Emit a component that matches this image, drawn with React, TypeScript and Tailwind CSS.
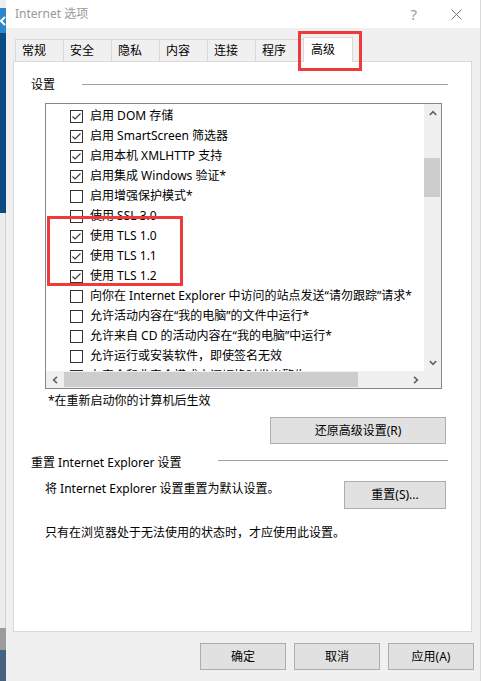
import React from "react";

type Item = { label: string; checked: boolean };

const items: Item[] = [
  { label: "启用 DOM 存储", checked: true },
  { label: "启用 SmartScreen 筛选器", checked: true },
  { label: "启用本机 XMLHTTP 支持", checked: true },
  { label: "启用集成 Windows 验证*", checked: true },
  { label: "启用增强保护模式*", checked: false },
  { label: "使用 SSL 3.0", checked: false },
  { label: "使用 TLS 1.0", checked: true },
  { label: "使用 TLS 1.1", checked: true },
  { label: "使用 TLS 1.2", checked: true },
  { label: "向你在 Internet Explorer 中访问的站点发送“请勿跟踪”请求*", checked: false },
  { label: "允许活动内容在“我的电脑”的文件中运行*", checked: false },
  { label: "允许来自 CD 的活动内容在“我的电脑”中运行*", checked: false },
  { label: "允许运行或安装软件，即使签名无效", checked: false },
  { label: "在安全和非安全模式之间切换时发出警告", checked: false },
];

const tabs = ["常规", "安全", "隐私", "内容", "连接", "程序"];

function CheckBox({ checked }: { checked: boolean }) {
  return (
    <svg width="13" height="13" viewBox="0 0 13 13" className="shrink-0">
      <rect x="0.5" y="0.5" width="12" height="12" fill="#fff" stroke="#333" />
      {checked && <polyline points="2.5,6.5 5,9 10.5,3.5" fill="none" stroke="#333" strokeWidth="1.1" />}
    </svg>
  );
}

function Chevron({ dir }: { dir: "up" | "down" | "left" | "right" }) {
  const rot = { up: 0, right: 90, down: 180, left: 270 }[dir];
  return (
    <svg width="8" height="8" viewBox="0 0 8 8" style={{ transform: `rotate(${rot}deg)` }}>
      <path d="M0.8 6 L4 2.6 L7.2 6" fill="none" stroke="#606060" strokeWidth="1.6" />
    </svg>
  );
}

function WinButton({ label, className }: { label: string; className: string }) {
  return (
    <div
      className={`flex items-center justify-center border border-[#adadad] bg-[#e1e1e1] text-[12px] leading-[16px] text-black ${className}`}
    >
      {label}
    </div>
  );
}

export default function App() {
  return (
    <div className="relative flex h-[681px] w-[481px] overflow-hidden font-['Noto_Sans','Noto_Sans_CJK_SC',sans-serif] text-black">
      {/* desktop strip on the left */}
      <div className="flex w-[6px] shrink-0 flex-col">
        <div className="h-[8px] bg-[#eeeeee]" />
        <div className="flex h-[25px] items-center bg-[#2b86cc]">
          <svg width="6" height="10" viewBox="0 0 6 10">
            <path d="M5 1 L1 5 L5 9" fill="none" stroke="#fff" strokeWidth="2" />
          </svg>
        </div>
        <div className="h-[180px] bg-[#0c4a85]" />
        <div className="h-[415px] border-r border-[#d0d0d0] bg-[#ececec]" />
        <div className="h-[22px] bg-[#9c9c9c]" />
        <div className="flex-1 bg-[#45627f]" />
      </div>

      <div className="flex flex-1 flex-col border-r border-[#dadada]">
        {/* title bar */}
        <div className="flex h-[28px] shrink-0 items-center bg-white pl-[9px] text-[12px] text-[#999]">
          <span>Internet 选项</span>
          <span className="ml-auto mr-[34px] text-[15px] text-[#9a9a9a]">?</span>
          <svg width="11" height="11" viewBox="0 0 11 11" className="mr-[18px]">
            <path d="M0.5 0.5 L10.5 10.5 M10.5 0.5 L0.5 10.5" stroke="#7a7a7a" strokeWidth="1" />
          </svg>
        </div>

        <div className="flex flex-1 flex-col bg-[#f0f0f0]">
          {/* tabs */}
          <div className="ml-[9px] mt-[9px] flex h-[24px] items-end text-[12px]">
            {tabs.map((t) => (
              <div
                key={t}
                className="flex h-[22px] w-[48px] items-center border-l border-t border-[#d9d9d9] pl-[6px] leading-[16px]"
              >
                {t}
              </div>
            ))}
            <div className="relative z-10 -mb-px flex h-[25px] w-[50px] items-start border-x border-t border-[#d9d9d9] bg-white pl-[7px] pt-[4px] leading-[16px]">
              高级
            </div>
          </div>

          {/* panel */}
          <div className="ml-[7px] flex h-[571px] w-[459px] flex-col border border-[#d9d9d9] bg-white text-[12px] leading-[16px]">
            <div className="mt-[15px] flex items-center pl-[17px] pr-[23px]">
              <span>设置</span>
              <div className="ml-auto mt-[-2px] h-px w-[366px] bg-[#a0a0a0]" />
            </div>

            {/* settings list */}
            <div className="ml-[31px] mt-[10px] flex h-[286px] w-[397px] flex-col border border-[#828790]">
              <div className="flex h-[267px]">
                <div className="flex-1 overflow-hidden pl-[24px] pt-[2px]">
                  {items.map((it) => (
                    <div key={it.label} className="flex h-[20px] items-center gap-[7px] whitespace-nowrap">
                      <CheckBox checked={it.checked} />
                      <span>{it.label}</span>
                    </div>
                  ))}
                </div>
                <div className="flex w-[17px] flex-col bg-[#f0f0f0]">
                  <div className="flex h-[17px] items-center justify-center">
                    <Chevron dir="up" />
                  </div>
                  <div className="flex-1">
                    <div className="mr-[1px] mt-[37px] h-[39px] bg-[#cdcdcd]" />
                  </div>
                  <div className="flex h-[17px] items-center justify-center">
                    <Chevron dir="down" />
                  </div>
                </div>
              </div>
              <div className="flex h-[17px] bg-[#f0f0f0]">
                <div className="flex w-[17px] items-center justify-center">
                  <Chevron dir="left" />
                </div>
                <div className="flex-1">
                  <div className="ml-[1px] mt-[1px] h-[15px] w-[294px] bg-[#cdcdcd]" />
                </div>
                <div className="flex w-[17px] items-center justify-center">
                  <Chevron dir="right" />
                </div>
                <div className="w-[17px]" />
              </div>
            </div>

            <div className="mt-[4px] pl-[34px]">*在重新启动你的计算机后生效</div>

            <WinButton label="还原高级设置(R)" className="mr-[25px] mt-[8px] h-[27px] w-[176px] self-end" />

            <div className="mt-[11px] flex items-center pl-[17px] pr-[23px]">
              <span>重置 Internet Explorer 设置</span>
              <div className="ml-auto mt-[-5px] h-px w-[230px] bg-[#a0a0a0]" />
            </div>

            <div className="mt-[10px] flex items-start pl-[31px] pr-[25px]">
              <span>将 Internet Explorer 设置重置为默认设置。</span>
              <WinButton label="重置(S)..." className="ml-auto h-[28px] w-[102px]" />
            </div>

            <div className="mt-[16px] pl-[31px]">只有在浏览器处于无法使用的状态时，才应使用此设置。</div>
          </div>

          {/* dialog buttons */}
          <div className="mt-[11px] flex justify-end gap-[8px] pr-[6px]">
            <WinButton label="确定" className="h-[27px] w-[86px]" />
            <WinButton label="取消" className="h-[27px] w-[86px]" />
            <WinButton label="应用(A)" className="h-[27px] w-[86px]" />
          </div>
        </div>
      </div>

      {/* red highlight boxes */}
      <div className="absolute left-[298px] top-[31px] h-[40px] w-[64px] border-[3px] border-[#ef3a3a]" />
      <div className="absolute left-[47px] top-[216px] h-[70px] w-[136px] border-[3px] border-[#ef3a3a]" />
    </div>
  );
}
